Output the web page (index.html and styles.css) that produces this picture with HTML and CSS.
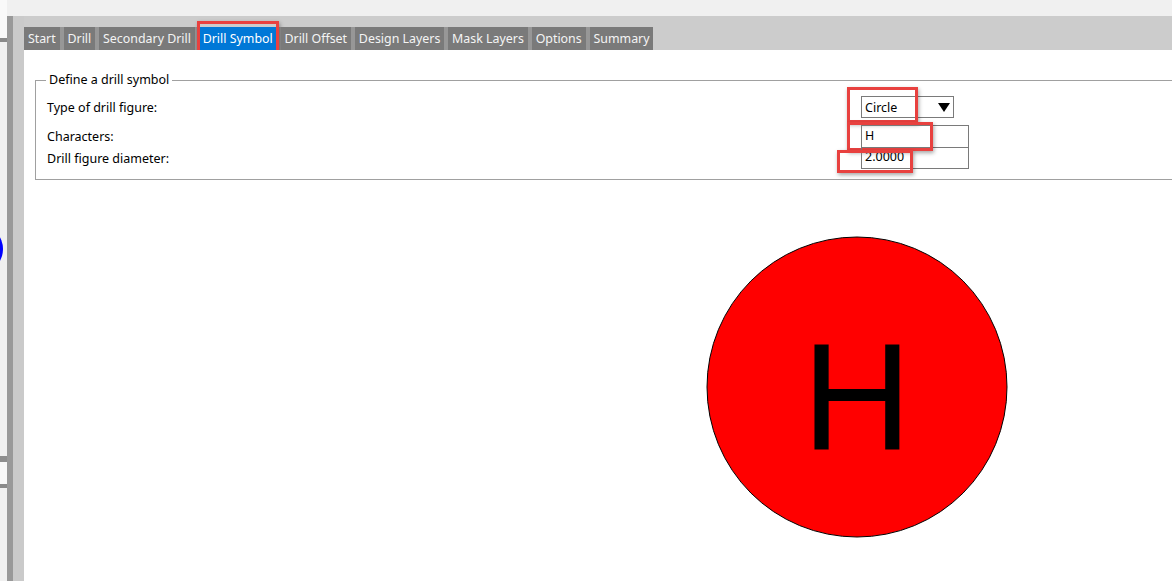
FILE: index.html
```html
<!DOCTYPE html>
<html>
<head>
<meta charset="utf-8">
<link rel="stylesheet" href="styles.css">
</head>
<body>
<div class="app">
  <div class="leftpane">
    <div class="lp-top"></div>
    <div class="lp-line"></div>
    <div class="lp-mid"><div class="blue-arc"></div></div>
    <div class="lp-line2"></div>
    <div class="lp-white"></div>
    <div class="lp-line3"></div>
    <div class="lp-bottom"></div>
  </div>
  <div class="divider"></div>
  <div class="main">
    <div class="tabbar">
      <div class="tabs">
        <div class="tab">Start</div>
        <div class="tab">Drill</div>
        <div class="tab">Secondary Drill</div>
        <div class="tab active">Drill Symbol<span class="hl hl-tab"></span></div>
        <div class="tab">Drill Offset</div>
        <div class="tab">Design Layers</div>
        <div class="tab">Mask Layers</div>
        <div class="tab">Options</div>
        <div class="tab">Summary</div>
      </div>
    </div>
    <div class="content">
      <fieldset class="group">
        <legend>Define a drill symbol</legend>
        <div class="row row1">
          <span class="label">Type of drill figure:</span>
          <div class="combo">
            <span>Circle</span>
            <svg class="arrow" width="12" height="9" viewBox="0 0 12 9"><path d="M0 0 H12 L6 9 Z" fill="#000"/></svg>
            <span class="hl hl-combo"></span>
          </div>
        </div>
        <div class="row row2">
          <span class="label">Characters:</span>
          <div class="field">H<span class="hl hl-h"></span></div>
        </div>
        <div class="row row3">
          <span class="label">Drill figure diameter:</span>
          <div class="field">2.0000<span class="hl hl-d"></span></div>
        </div>
      </fieldset>
      <div class="preview">
        <svg width="302" height="302" viewBox="0 0 302 302">
          <circle cx="151" cy="151" r="150" fill="#ff0000" stroke="#000" stroke-width="1"/>
          <text x="151" y="214" text-anchor="middle" font-family="Liberation Sans, Arial, sans-serif" font-size="152" fill="#000">H</text>
        </svg>
      </div>
    </div>
  </div>
</div>
</body>
</html>
```
FILE: styles.css
```css
html, body {
  margin: 0;
  padding: 0;
}
body {
  background: #f0f0f0;
  font-family: "Noto Sans", "Open Sans", sans-serif;
  font-size: 12px;
  color: #000;
  overflow: hidden;
}
.app {
  display: flex;
  width: 1172px;
  height: 581px;
}
.leftpane {
  width: 7px;
  display: flex;
  flex-direction: column;
}
.lp-top {
  height: 38px;
  background: #f9f9f9;
}
.lp-line {
  height: 4px;
  background: #8a8a8a;
}
.lp-mid {
  height: 414px;
  background: #f0f0f0;
  position: relative;
  overflow: hidden;
}
.blue-arc {
  position: absolute;
  left: -40px;
  top: 184px;
  width: 43px;
  height: 46px;
  border-radius: 50%;
  background: #0000ff;
}
.lp-line2 {
  height: 6px;
  background: #8e8e8e;
}
.lp-white {
  height: 22px;
  background: #f8f8f8;
}
.lp-line3 {
  height: 4px;
  background: #8a8a8a;
}
.lp-bottom {
  flex: 1;
  background: #f0f0f0;
}
.divider {
  width: 6px;
  margin-top: 16px;
  background: #999999;
}
.main {
  flex: 1;
  margin-top: 16px;
  background: #cacaca;
  padding-left: 11px;
  display: flex;
  flex-direction: column;
}
.tabbar {
  height: 34px;
  background: #cccccc;
  display: flex;
  align-items: flex-end;
}
.tabs {
  display: flex;
  gap: 4px;
  background: #979797;
  height: 23px;
}
.tab {
  position: relative;
  background: #7a7a7a;
  color: #f4f4f4;
  font-size: 12.4px;
  line-height: 23px;
  padding: 0 3.9px;
}
.tab.active {
  background: #0078d7;
  color: #fff;
}
.content {
  flex: 1;
  background: #fff;
  position: relative;
  padding: 23px 0 0 11px;
}
.group {
  margin: 0;
  border: 1px solid #a0a0a0;
  border-right: none;
  padding: 0 0 8px 11px;
  height: 97px;
  box-sizing: content-box;
}
.group legend {
  padding: 0 3px;
  margin-left: -1px;
  font-size: 12.5px;
  line-height: 14px;
}
.row {
  position: relative;
  display: flex;
  align-items: center;
  font-size: 12.5px;
}
.label {
  flex: 1;
}
.row1 {
  height: 22px;
  margin-top: 9px;
}
.row2 {
  height: 22px;
  margin-top: 7px;
}
.row3 {
  height: 22px;
}
.combo {
  position: relative;
  width: 93px;
  height: 22px;
  border: 1px solid #7a7a7a;
  display: flex;
  align-items: center;
  justify-content: space-between;
  padding: 0 3px 0 3px;
  box-sizing: border-box;
  margin-right: 218px;
  font-size: 12.5px;
}
.arrow {
  display: block;
}
.field {
  position: relative;
  width: 108px;
  height: 22px;
  border: 1px solid #7a7a7a;
  box-sizing: border-box;
  padding-left: 3px;
  line-height: 20px;
  margin-right: 203px;
  font-size: 12.5px;
}
.row3 .field {
  border-top: none;
  height: 22px;
}
.row2 .field {
  height: 23px;
}
.hl {
  position: absolute;
  border: 3px solid #e8413f;
  box-shadow: 1px 2px 4px rgba(0, 0, 0, 0.35);
  box-sizing: border-box;
  pointer-events: none;
}
.hl-tab {
  left: -2px;
  top: -6px;
  width: 82px;
  height: 33px;
}
.hl-combo {
  left: -15px;
  top: -10px;
  width: 71px;
  height: 36px;
}
.hl-h {
  left: -15px;
  top: -4px;
  width: 86px;
  height: 29px;
}
.hl-d {
  left: -25px;
  top: 3px;
  width: 76px;
  height: 23px;
}
.preview {
  position: absolute;
  left: 682px;
  top: 186px;
  width: 302px;
  height: 302px;
}
.preview svg {
  display: block;
}
```
